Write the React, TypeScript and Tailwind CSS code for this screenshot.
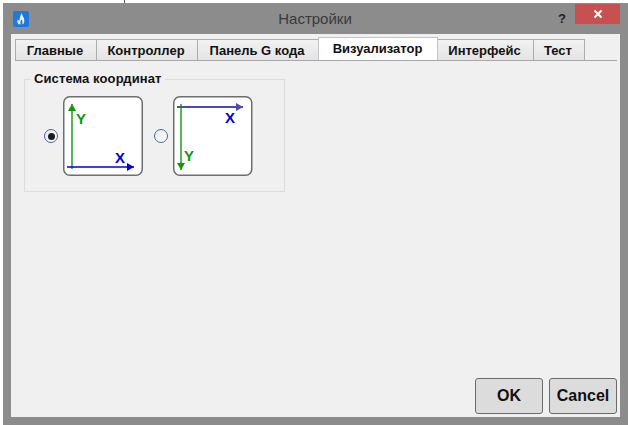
import React from 'react';

const tabs = [
  { label: 'Главные', width: 'w-[82px]' },
  { label: 'Контроллер', width: 'w-[102px]' },
  { label: 'Панель G кода', width: 'w-[122px]' },
  { label: 'Визуализатор', width: 'w-[120px]', active: true },
  { label: 'Интерфейс', width: 'w-[97px]' },
  { label: 'Тест', width: 'w-[52px]' },
];

const AppIcon = () => (
  <svg width="16" height="16" viewBox="0 0 17 17">
    <rect width="17" height="17" rx="2" fill="#1f78e0" />
    <path d="M9 2 C10 5 12 7 12 10 C12 13 11 14 10 14 L10 11 L9 9 L8 11 L8 14 L6 14 C5 13 4 12 5 9 C6 10 6 10 7 10 C7 7 8 5 9 2 Z" fill="#e6f0fb" />
  </svg>
);

const Arrow = ({ x1, y1, x2, y2, color, dir, width = 1.4 }: { x1: number; y1: number; x2: number; y2: number; color: string; dir: 'up' | 'down' | 'right'; width?: number }) => {
  const head =
    dir === 'up'
      ? `${x2},${y2} ${x2 - 4},${y2 + 7} ${x2 + 4},${y2 + 7}`
      : dir === 'down'
        ? `${x2},${y2} ${x2 - 4},${y2 - 7} ${x2 + 4},${y2 - 7}`
        : `${x2},${y2} ${x2 - 7},${y2 - 4} ${x2 - 7},${y2 + 4}`;
  return (
    <g>
      <line x1={x1} y1={y1} x2={x2} y2={y2} stroke={color} strokeWidth={width} />
      <polygon points={head} fill={color} />
    </g>
  );
};

const OriginBottom = () => (
  <svg width="80" height="80" viewBox="0 0 80 80" className="block">
    <rect x="0.75" y="0.75" width="78.5" height="78.5" rx="6" fill="#fff" stroke="#6e6e6e" strokeWidth="1.5" />
    <Arrow x1={9} y1={73} x2={9} y2={8} color="#0b9a0b" dir="up" />
    <Arrow x1={4} y1={71} x2={71} y2={71} color="#0000d8" dir="right" />
    <text x="13" y="28" fontSize="15" fontWeight="700" fill="#0b9a0b" fontFamily="Liberation Sans, sans-serif">Y</text>
    <text x="52" y="67" fontSize="15" fontWeight="700" fill="#0000d8" fontFamily="Liberation Sans, sans-serif">X</text>
  </svg>
);

const OriginTop = () => (
  <svg width="80" height="80" viewBox="0 0 80 80" className="block">
    <rect x="0.75" y="0.75" width="78" height="78.5" rx="6" fill="#fff" stroke="#6e6e6e" strokeWidth="1.5" />
    <Arrow x1={4} y1={11} x2={70} y2={11} color="#4a4ac0" dir="right" width={2} />
    <Arrow x1={8} y1={8} x2={8} y2={74} color="#0b9a0b" dir="down" />
    <text x="52" y="27" fontSize="15" fontWeight="700" fill="#0000d8" fontFamily="Liberation Sans, sans-serif">X</text>
    <text x="11" y="65" fontSize="15" fontWeight="700" fill="#0b9a0b" fontFamily="Liberation Sans, sans-serif">Y</text>
  </svg>
);

const Radio = ({ checked }: { checked?: boolean }) => (
  <span className="flex h-[14px] w-[14px] items-center justify-center rounded-full border border-[#4a6a94] bg-[linear-gradient(135deg,#e4e8ee,#ffffff)]">
    {checked && <span className="h-[7px] w-[7px] rounded-full bg-[#1c1c1c]" />}
  </span>
);

const DialogButton = ({ label }: { label: string }) => (
  <button className="flex h-[36px] w-[68px] items-center justify-center rounded-[3px] border border-[#6a6a6a] bg-[#dcdcdc] text-[16px] font-bold text-[#111]">
    {label}
  </button>
);

export default function App() {
  return (
    <div className="flex h-[425px] w-[628px] flex-col overflow-hidden bg-white font-['Liberation_Sans',sans-serif]">
      <div className="flex h-[3px] shrink-0 pl-[124px]">
        <div className="h-full w-px bg-[#555]" />
      </div>
      <div className="ml-[3px] flex min-h-0 flex-1 flex-col bg-[#8c8c8c]">
        <div className="relative flex h-[31px] shrink-0 items-center pl-[10px] pr-[27px]">
          <AppIcon />
          <div className="flex-1 pt-[2px] text-center text-[15px] text-[#3a3a3a]">Настройки</div>
          <span className="absolute right-[62px] top-[6px] text-[13px] font-bold text-[#222]">?</span>
          <div className="absolute right-[8px] top-[1px] flex h-[20px] w-[45px] items-center justify-center bg-[#c75050]">
            <svg width="10" height="10" viewBox="0 0 10 10">
              <path d="M1.5 1.5 L8.5 8.5 M8.5 1.5 L1.5 8.5" stroke="#fff" strokeWidth="2" />
            </svg>
          </div>
        </div>
        <div className="mb-[8px] ml-[8px] mr-[8px] flex min-h-0 flex-1 flex-col bg-[#f0f0f0] pt-[5px]">
          <div className="ml-[4px] mr-[3px] flex h-[22px] shrink-0 items-end border-b border-[#a8a8a8] pl-[1px]">
            {tabs.map((tab) =>
              tab.active ? (
                <div key={tab.label} className={`${tab.width} relative -ml-px h-[23px] shrink-0 border border-b-0 border-[#c4c4c4] bg-white pr-[1px] text-center text-[13px] font-bold leading-[21px] text-[#111]`}>
                  {tab.label}
                </div>
              ) : (
                <div key={tab.label} className={`${tab.width} -ml-px h-[21px] shrink-0 border border-b-0 border-[#acacac] bg-[linear-gradient(#f2f2f2,#e4e4e4)] pr-[2px] text-center text-[13px] font-bold leading-[21px] text-[#111]`}>
                  {tab.label}
                </div>
              ),
            )}
          </div>
          <div className="flex min-h-0 flex-1 flex-col pl-[13px] pr-[3px] pt-[11px]">
            <fieldset className="w-[261px] border border-[#dcdcdc] pb-[15px] pl-[19px]">
              <legend className="ml-[-13px] px-[3px] text-[13px] font-bold leading-[14px] tracking-[0.1px] text-[#111]">Система координат</legend>
              <div className="mt-[10px] flex items-center">
                <Radio checked />
                <div className="ml-[5px]"><OriginBottom /></div>
                <div className="ml-[11px]"><Radio /></div>
                <div className="ml-[5px]"><OriginTop /></div>
              </div>
            </fieldset>
            <div className="mt-auto mb-[3px] flex justify-end gap-[6px]">
              <DialogButton label="OK" />
              <DialogButton label="Cancel" />
            </div>
          </div>
        </div>
      </div>
    </div>
  );
}
